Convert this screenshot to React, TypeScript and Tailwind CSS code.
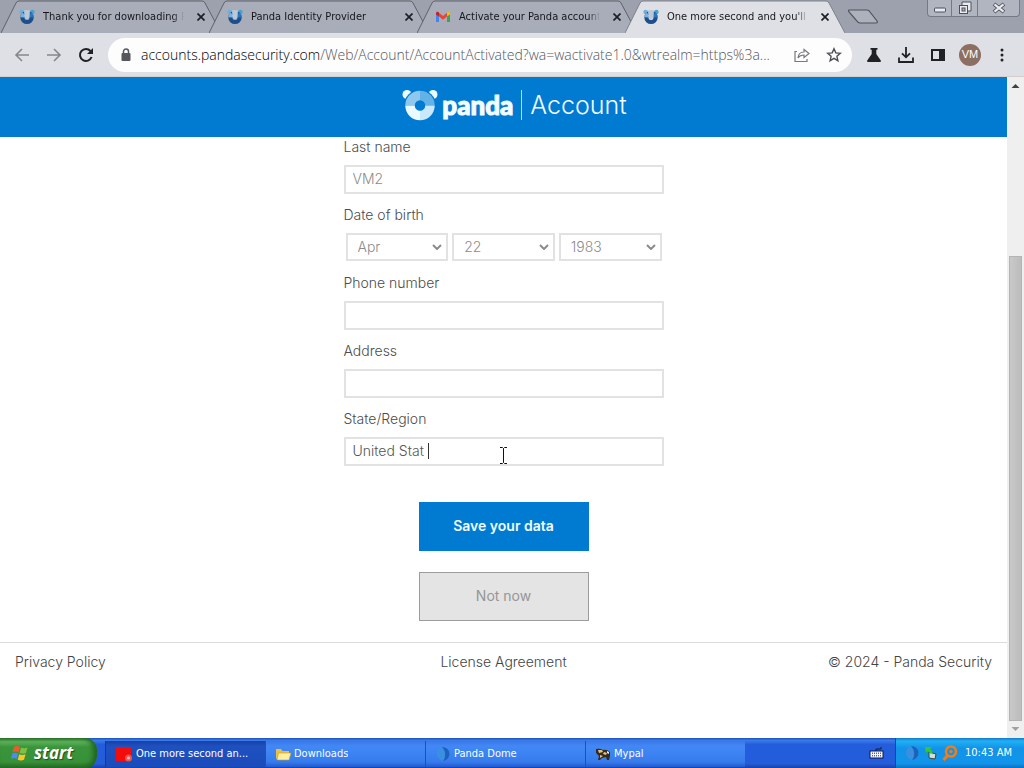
import type { ReactNode } from "react";

function PandaFavicon() {
  return (
    <svg viewBox="0 0 16 16" className="size-4 shrink-0" aria-hidden="true">
      <circle cx="2.6" cy="3" r="2.3" fill="#6fb1dc" />
      <circle cx="13.4" cy="3" r="2.3" fill="#4b9fd6" />
      <circle cx="8" cy="8.4" r="4.6" fill="none" stroke="#1d4f8f" strokeWidth="4.2" />
      <path d="M3.4 8.4A4.6 4.6 0 0 1 5 5" fill="none" stroke="#7fb2da" strokeWidth="4.2" />
      <path d="M11 5a4.6 4.6 0 0 1 1.600 3.400" fill="none" stroke="#2f75b8" strokeWidth="4.200" />
      <path d="M5 1.500Q8 .5 11 1.500L10.500 8a2.600 2.600 0 0 1-5 0z" fill="#b9c9dc" />
    </svg>
  );
}

function GmailFavicon() {
  return (
    <svg viewBox="0 0 16 16" className="size-4 shrink-0" aria-hidden="true">
      <path d="M1 4.5V13h3V6.8z" fill="#4285f4" />
      <path d="M15 4.5V13h-3V6.8z" fill="#34a853" />
      <path d="M4 3.8 8 7l4-3.2v3.8L8 10.8 4 7.600z" fill="#ea4335" />
      <path d="M1 4.600C1 2.600 3 2.400 4 3.500v4.100L1 5.500z" fill="#c5221f" />
      <path d="M15 4.600c0-2-2-2.200-3-1.100v4.100l3-2.100z" fill="#fbbc04" />
    </svg>
  );
}

function Tab({ title, icon, active = false }: { title: string; icon: ReactNode; active?: boolean }) {
  return (
    <div className="relative -ml-3 h-[33px] w-[220px] first:ml-0">
      <svg viewBox="0 0 220 33" className="absolute inset-0 size-full" aria-hidden="true">
        <path
          d="M0 33 15 3Q16 1 18 1H201Q203 1 204 3L220 33z"
          fill={active ? "#dfe0e5" : "#a9adb9"}
        />
        <path d="M0 33 15 3Q16 1 18 1H201Q203 1 204 3L220 33" fill="none" stroke={active ? "#7d808b" : "#5d606b"} />
      </svg>
      <div className="relative flex h-full items-center pt-px pr-3 pl-[18px]">
        {icon}
        <span className="ml-2 w-[144px] overflow-hidden font-['DejaVu_Sans_Condensed','DejaVu_Sans',sans-serif] text-[11px] whitespace-nowrap text-[#16171c] [mask-image:linear-gradient(to_right,black_90%,transparent_98%)]">
          {title}
        </span>
        <button type="button" aria-label="Close tab" className="ml-[6px] flex size-4 shrink-0 items-center justify-center">
          <svg viewBox="0 0 8 8" className="size-2" aria-hidden="true">
            <path d="m.5.5 7 7m0-7-7 7" stroke="#1d1f25" strokeWidth="1.7" />
          </svg>
        </button>
      </div>
    </div>
  );
}

function WindowButtons() {
  return (
    <div className="mr-1 flex h-[17px] rounded-b-sm border border-t-0 border-[#747985] bg-[#b1b5c0]">
      <button type="button" aria-label="Minimize" className="flex w-6 items-center justify-center border-r border-[#747985]">
        <svg viewBox="0 0 12 6" className="mt-1 h-[6px] w-3" aria-hidden="true">
          <rect x=".5" y="1" width="11" height="4" rx="1" fill="#e9ebf0" stroke="#4c505c" />
        </svg>
      </button>
      <button type="button" aria-label="Restore" className="flex w-[26px] items-center justify-center border-r border-[#747985]">
        <svg viewBox="0 0 14 14" className="size-[14px]" aria-hidden="true">
          <path d="M4 4V1h9v9h-3" fill="#e9ebf0" stroke="#4c505c" />
          <rect x="1.500" y="4.500" width="8" height="8" fill="#e9ebf0" stroke="#4c505c" />
          <rect x="4" y="7" width="3" height="3" fill="#b1b5c0" stroke="#4c505c" />
        </svg>
      </button>
      <button type="button" aria-label="Close" className="flex w-[41px] items-center justify-center">
        <svg viewBox="0 0 14 12" className="h-3 w-[14px]" aria-hidden="true">
          <path d="m2 2 10 8m0-8L2 10" stroke="#4c505c" strokeWidth="4" />
          <path d="m2.500 2.400 9 7.200m0-7.200-9 7.200" stroke="#e9ebf0" strokeWidth="2.200" />
        </svg>
      </button>
    </div>
  );
}

function TabStrip() {
  return (
    <div className="flex h-[33px] justify-between bg-[#9da1ad] pl-px">
      <div className="flex">
        <Tab title="Thank you for downloading P" icon={<PandaFavicon />} />
        <Tab title="Panda Identity Provider" icon={<PandaFavicon />} />
        <Tab title="Activate your Panda account" icon={<GmailFavicon />} />
        <Tab title="One more second and you'll b" icon={<PandaFavicon />} active />
        <button type="button" aria-label="New tab" className="ml-[2px] flex items-center">
          <svg viewBox="0 0 32 15" className="h-[15px] w-8" aria-hidden="true">
            <path d="M2 1h18q2 0 3 2l7 9q1 2-1 2H13q-2 0-3-2L2 3Q1 1 2 1z" fill="#adb1bc" stroke="#4f535e" strokeWidth="1.200" />
          </svg>
        </button>
      </div>
      <WindowButtons />
    </div>
  );
}

function Toolbar() {
  return (
    <div className="flex h-11 items-center border-b border-[#d5cfc9] bg-[#dfe0e5] px-[14px]">
      <button type="button" aria-label="Back">
        <svg viewBox="0 0 16 16" className="size-4" fill="none" stroke="#85878e" strokeWidth="1.600" aria-hidden="true">
          <path d="M15 8H2m6-6L2 8l6 6" />
        </svg>
      </button>
      <button type="button" aria-label="Forward" className="ml-4">
        <svg viewBox="0 0 16 16" className="size-4" fill="none" stroke="#85878e" strokeWidth="1.600" aria-hidden="true">
          <path d="M1 8h13M8 2l6 6-6 6" />
        </svg>
      </button>
      <button type="button" aria-label="Reload" className="ml-4">
        <svg viewBox="0 0 16 16" className="size-4" fill="none" stroke="#202124" strokeWidth="2" aria-hidden="true">
          <path d="M13.600 10A6 6 0 1 1 12.500 4" />
          <path d="M15 1v6H9z" fill="#202124" stroke="none" />
        </svg>
      </button>
      <div className="ml-[14px] flex h-[34px] min-w-0 flex-1 items-center rounded-full bg-[#fdfdfe] pr-[10px] pl-3">
        <svg viewBox="0 0 12 14" className="h-[14px] w-3 shrink-0" aria-hidden="true">
          <rect x="1.500" y="5" width="9" height="8" rx="1" fill="#55575c" />
          <path d="M3.500 5V3.500a2.500 2.500 0 0 1 5 0V5" fill="none" stroke="#55575c" strokeWidth="1.500" />
        </svg>
        <div className="ml-[9px] min-w-0 flex-1 overflow-hidden font-['Open_Sans',sans-serif] text-[14px] font-light whitespace-nowrap text-[#55575c]">
          <span className="text-black">accounts.pandasecurity.com</span>
          /Web/Account/AccountActivated?wa=wactivate1.0&amp;wtrealm=https%3a...
        </div>
        <button type="button" aria-label="Share this page" className="ml-3">
          <svg viewBox="0 0 16 16" className="size-4" fill="none" stroke="#77797f" strokeWidth="1.200" aria-hidden="true">
            <path d="M3 4.500H1v10h12V12" />
            <path d="M10 2.500 15 6.500l-5 4V8q-4 0-6 3 .5-6 6-6z" />
          </svg>
        </button>
        <button type="button" aria-label="Bookmark this tab" className="ml-4">
          <svg viewBox="0 0 16 16" className="size-4" fill="none" stroke="#4d4f55" strokeWidth="1.400" aria-hidden="true">
            <path d="m8 1.800 1.800 4.100 4.500.4-3.400 3 1 4.400L8 11.400l-3.900 2.300 1-4.400-3.400-3 4.500-.4z" />
          </svg>
        </button>
      </div>
      <button type="button" aria-label="Experiments" className="ml-[14px]">
        <svg viewBox="0 0 16 16" className="size-4" fill="#202124" aria-hidden="true">
          <path d="M4.500 1h7v1.800h-1.200V7l4.500 6.500q.7 1.500-1 1.500H2.200q-1.700 0-1-1.500L5.700 7V2.800H4.500z" />
        </svg>
      </button>
      <button type="button" aria-label="Downloads" className="ml-4">
        <svg viewBox="0 0 16 16" className="size-4" fill="none" stroke="#202124" strokeWidth="1.800" aria-hidden="true">
          <path d="M8 0v10M4 6.300l4 4 4-4M1 10.500V15h14v-4.500" />
        </svg>
      </button>
      <button type="button" aria-label="Side panel" className="ml-4">
        <svg viewBox="0 0 16 16" className="size-4" aria-hidden="true">
          <path d="M1 2h14v12H1z" fill="#202124" />
          <path d="M3 4h6v8H3z" fill="#dfe0e5" />
        </svg>
      </button>
      <button
        type="button"
        aria-label="Profile"
        className="ml-[13px] flex size-[22px] items-center justify-center rounded-full bg-[#8d6e63] font-['Liberation_Sans',sans-serif] text-[11px] text-white"
      >
        VM
      </button>
      <button type="button" aria-label="Menu" className="ml-[13px]">
        <svg viewBox="0 0 16 16" className="size-4" fill="#202124" aria-hidden="true">
          <circle cx="8" cy="3" r="1.500" />
          <circle cx="8" cy="8" r="1.500" />
          <circle cx="8" cy="13" r="1.500" />
        </svg>
      </button>
    </div>
  );
}

function PandaLogo() {
  return (
    <svg viewBox="0 0 36 32" className="h-8 w-9" aria-hidden="true">
      <circle cx="5" cy="5.500" r="4.500" fill="#eafaff" />
      <circle cx="31" cy="5.500" r="4.500" fill="#eafaff" />
      <circle cx="18" cy="16.500" r="16" fill="#007bd1" />
      <g fill="none" strokeWidth="9.500">
        <path d="M18 6.500A10 10 0 0 0 8 16.500" stroke="#8fc8ee" />
        <path d="M18 6.500A10 10 0 0 1 28 16.500" stroke="#62b2e8" />
        <path d="M8 16.500A10 10 0 0 0 18 26.500" stroke="#eafaff" />
        <path d="M28 16.500A10 10 0 0 1 18 26.500" stroke="#c9e9fa" />
      </g>
    </svg>
  );
}

function SiteHeader() {
  return (
    <header className="flex h-[60px] items-center justify-center bg-[#007bd1] pb-1 pl-[22px] text-[#f3fcff]">
      <PandaLogo />
      <span className="ml-1 font-['Lato',sans-serif] text-[26px] leading-8 font-black [-webkit-text-stroke:1px_#f3fcff]">panda</span>
      <span className="mr-2 ml-2 h-[30px] w-px bg-[#a6e0ff]" />
      <span className="font-['Inter',sans-serif] text-[25px] leading-8 font-light">Account</span>
    </header>
  );
}

const fieldBox =
  "block h-[29px] w-full rounded-none border-2 border-[#e2e2e2] bg-white px-[7px] pb-[2px] text-[14px] outline-none";

function Field({ id, label, value = "", dim = false, children }: { id: string; label: string; value?: string; dim?: boolean; children?: ReactNode }) {
  return (
    <div className="mb-[11px]">
      <label htmlFor={id} className="mb-2 block leading-5">
        {label}
      </label>
      <div className="relative">
        <input id={id} type="text" defaultValue={value} className={`${fieldBox} ${dim ? "text-[#8c8c8c]" : "text-[#555555]"}`} />
        {children}
      </div>
    </div>
  );
}

function DateSelect({ label, options }: { label: string; options: string[] }) {
  return (
    <div className="relative flex-1">
      <select
        aria-label={label}
        className="block h-7 w-full appearance-none rounded-none border-2 border-[#e2e2e2] bg-white pb-[2px] pl-[10px] text-[14px] text-[#8c8c8c] outline-none"
      >
        {options.map((option) => (
          <option key={option}>{option}</option>
        ))}
      </select>
      <svg viewBox="0 0 10 6" className="pointer-events-none absolute top-[11px] right-[6px] h-[6px] w-[10px]" aria-hidden="true">
        <path d="m1 1 4 4 4-4" fill="none" stroke="#8b8b8b" strokeWidth="2" />
      </svg>
    </div>
  );
}

function AccountForm() {
  return (
    <form className="mx-auto w-80 text-[14px] font-light text-[#4c4c4c]">
      <Field id="last-name" label="Last name" value="VM2" dim />
      <fieldset className="mb-3">
        <legend className="mb-2 leading-5">Date of birth</legend>
        <div className="flex gap-1 px-[2px]">
          <DateSelect label="Month" options={["Apr"]} />
          <DateSelect label="Day" options={["22"]} />
          <DateSelect label="Year" options={["1983"]} />
        </div>
      </fieldset>
      <Field id="phone" label="Phone number" />
      <Field id="address" label="Address" />
      <Field id="region" label="State/Region" value="United Stat">
        <span className="absolute top-[6px] left-[84px] h-4 w-px bg-[#333333]" />
        <svg viewBox="0 0 9 17" className="absolute top-[10px] left-[155px] h-[17px] w-[9px]" aria-hidden="true">
          <path d="M1 .5h2.500L4.500 1.500 5.500.5H8M4.500 1.500v14M1 16.500h2.500l1-1 1 1H8" fill="none" stroke="#111" />
        </svg>
      </Field>
      <div className="flex flex-col items-center gap-[21px] pt-[25px]">
        <button type="button" className="h-[49px] w-[170px] bg-[#007bd1] pb-[2px] font-semibold text-[#effbff]">
          Save your data
        </button>
        <button type="button" className="h-[49px] w-[170px] border border-[#9c9c9c] bg-[#e4e4e4] pb-[2px] font-normal text-[#969696]">
          Not now
        </button>
      </div>
    </form>
  );
}

function ScrollBar() {
  return (
    <div className="flex w-[17px] shrink-0 flex-col items-stretch bg-[#efefef] px-[2px]" aria-hidden="true">
      <svg viewBox="0 0 13 17" className="h-[17px] w-[13px]">
        <path d="m2.500 11 4-4 4 4z" fill="#404040" />
      </svg>
      <div className="grow-[163]" />
      <div className="grow-[464] border border-[#b4b4b4] bg-[linear-gradient(to_right,#c9c9c9,#bcbcbc)]" />
      <svg viewBox="0 0 13 17" className="h-[17px] w-[13px]">
        <path d="m2.500 6 4 4 4-4z" fill="#a0a0a0" />
      </svg>
    </div>
  );
}

function WindowsFlag() {
  return (
    <svg viewBox="0 0 18 18" className="size-[18px]" aria-hidden="true">
      <path d="M3 3q3-2 6 0L7.500 8.500q-3-2-6 0z" fill="#ef5a2a" />
      <path d="M10 3.500q3 1.600 6.500 0L15 9q-3 1.600-6.500 0z" fill="#7cc142" />
      <path d="M1.200 9.700q3-2 6 0L5.700 15q-3-2-5.700 0z" fill="#4a8df0" />
      <path d="M8.200 10.200q3 1.600 6.400 0L13 15.700q-3 1.600-6.300 0z" fill="#fbc52c" />
    </svg>
  );
}

function TaskButton({ title, icon, active = false }: { title: string; icon: ReactNode; active?: boolean }) {
  return (
    <button
      type="button"
      className={
        active
          ? "flex h-full w-40 items-center gap-[3px] border-l border-[#123a9c] bg-[linear-gradient(#1a3fa6,#1e50c0_20%,#1c4cbc)] pl-[9px] text-left"
          : "flex h-full w-40 items-center gap-[3px] border-l border-[#1f4fc0] bg-[linear-gradient(#3a77e8,#4288f5_20%,#367cee_80%,#2459ce)] pl-[9px] text-left"
      }
    >
      {icon}
      <span className="truncate">{title}</span>
    </button>
  );
}

function BlueOrb() {
  return (
    <svg viewBox="0 0 16 16" className="size-4" aria-hidden="true">
      <path d="M7 1a7 7 0 0 1 1 14q5-7-1-14z" fill="#1c62bd" />
      <path d="M7 1Q1 4 2 9q1 4 6 6 4-7-1-14z" fill="#3b8fe0" />
    </svg>
  );
}

function Taskbar() {
  return (
    <footer className="flex h-[30px] bg-[linear-gradient(#1c50b8,#3a7bec_8%,#245ddb_22%,#245ddb_85%,#1941a5)] font-['DejaVu_Sans_Condensed','DejaVu_Sans',sans-serif] text-[11px] text-white">
      <button
        type="button"
        className="mr-2 flex w-[97px] items-center gap-[5px] rounded-r-xl bg-[linear-gradient(#2f7a30,#5db35b_12%,#3b943b_30%,#379137_80%,#256f26)] pl-[11px] shadow-[inset_-4px_0_5px_#206522]"
      >
        <WindowsFlag />
        <span className="font-['Open_Sans',sans-serif] text-[17px] leading-6 font-bold italic [text-shadow:1px_1px_1px_#1c4f1c]">start</span>
      </button>
      <div className="flex pt-[3px] pb-px">
        <TaskButton
          active
          title="One more second an..."
          icon={
            <svg viewBox="0 0 18 16" className="h-4 w-[18px] shrink-0" aria-hidden="true">
              <path d="M1 1h15v14H1z" fill="#f40b0b" />
              <circle cx="13.500" cy="12" r="3.500" fill="#e8564e" />
              <circle cx="13.500" cy="12" r="1.600" fill="#d5b8c6" />
            </svg>
          }
        />
        <TaskButton
          title="Downloads"
          icon={
            <svg viewBox="0 0 16 16" className="size-4 shrink-0" aria-hidden="true">
              <path d="M1 3h5l1.500 2H14v9H2.500L1 12z" fill="#e9bf45" />
              <path d="M3.500 7H16l-2 7H2z" fill="#fff0a0" stroke="#c79c2e" strokeWidth=".6" />
            </svg>
          }
        />
        <TaskButton title="Panda Dome" icon={<BlueOrb />} />
        <TaskButton
          title="Mypal"
          icon={
            <svg viewBox="0 0 16 16" className="size-4 shrink-0" aria-hidden="true">
              <path d="M1 3q4-1 7 1 4-1 7 2v4l-1 4h-2l-1-3-4 1-2 2H3l1-4-3-3z" fill="#352c20" />
              <path d="M3 4h4l1 2-4 1zM9 6l3 1-1 2-3-1zM5 9l3 1-3 2z" fill="#e8c37b" />
              <path d="M12 5l2 1v2l-2-1z" fill="#f2eee4" />
            </svg>
          }
        />
      </div>
      <div className="ml-auto flex items-center pr-[11px]">
        <svg viewBox="0 0 15 12" className="h-3 w-[15px]" aria-hidden="true">
          <path d="M7 4V2h5V0" fill="none" stroke="#111b38" />
          <rect x="1" y="4" width="13" height="7" fill="#f4f5fa" stroke="#0c1a4a" />
          <path d="M3 6.200h9M3 8.800h9" stroke="#1a2348" strokeDasharray="1 1" />
        </svg>
      </div>
      <div className="flex items-center gap-[3px] border-l border-[#0c4d9e] bg-[linear-gradient(#1578c8,#1fb0f4_10%,#1293e8_35%,#1194ea_85%,#0d6fc2)] pr-3 pl-2">
        <BlueOrb />
        <svg viewBox="0 0 16 16" className="size-4" aria-hidden="true">
          <path d="m6 7 7 2-1 5-6-1z" fill="#d7dfd5" stroke="#37483b" />
          <path d="M2 2h7L7 4l3 3-2 2-3-3-2 2z" fill="#35c92f" />
        </svg>
        <svg viewBox="0 0 16 16" className="size-4" fill="none" stroke="#f47c12" aria-hidden="true">
          <circle cx="9" cy="6.500" r="5" strokeWidth="2.600" />
          <circle cx="9" cy="6.500" r="1.300" fill="#f47c12" />
          <path d="m5.500 10.500-4 4.500" strokeWidth="3" />
        </svg>
        <time className="ml-1 whitespace-nowrap">10:43 AM</time>
      </div>
    </footer>
  );
}

export default function App() {
  return (
    <div className="flex min-h-screen flex-col bg-white font-['Inter',sans-serif]">
      <TabStrip />
      <Toolbar />
      <div className="flex flex-1">
        <div className="flex min-w-0 flex-1 flex-col">
          <SiteHeader />
          <main className="pb-[21px]">
            <AccountForm />
          </main>
          <div className="grid grid-cols-3 border-t border-[#dcdcdc] px-[15px] pt-[9px] text-[14px] leading-5 font-light text-[#444444]">
            <a href="#privacy">Privacy Policy</a>
            <a href="#license" className="text-center">
              License Agreement
            </a>
            <span className="text-right">© 2024 - Panda Security</span>
          </div>
        </div>
        <ScrollBar />
      </div>
      <Taskbar />
    </div>
  );
}
